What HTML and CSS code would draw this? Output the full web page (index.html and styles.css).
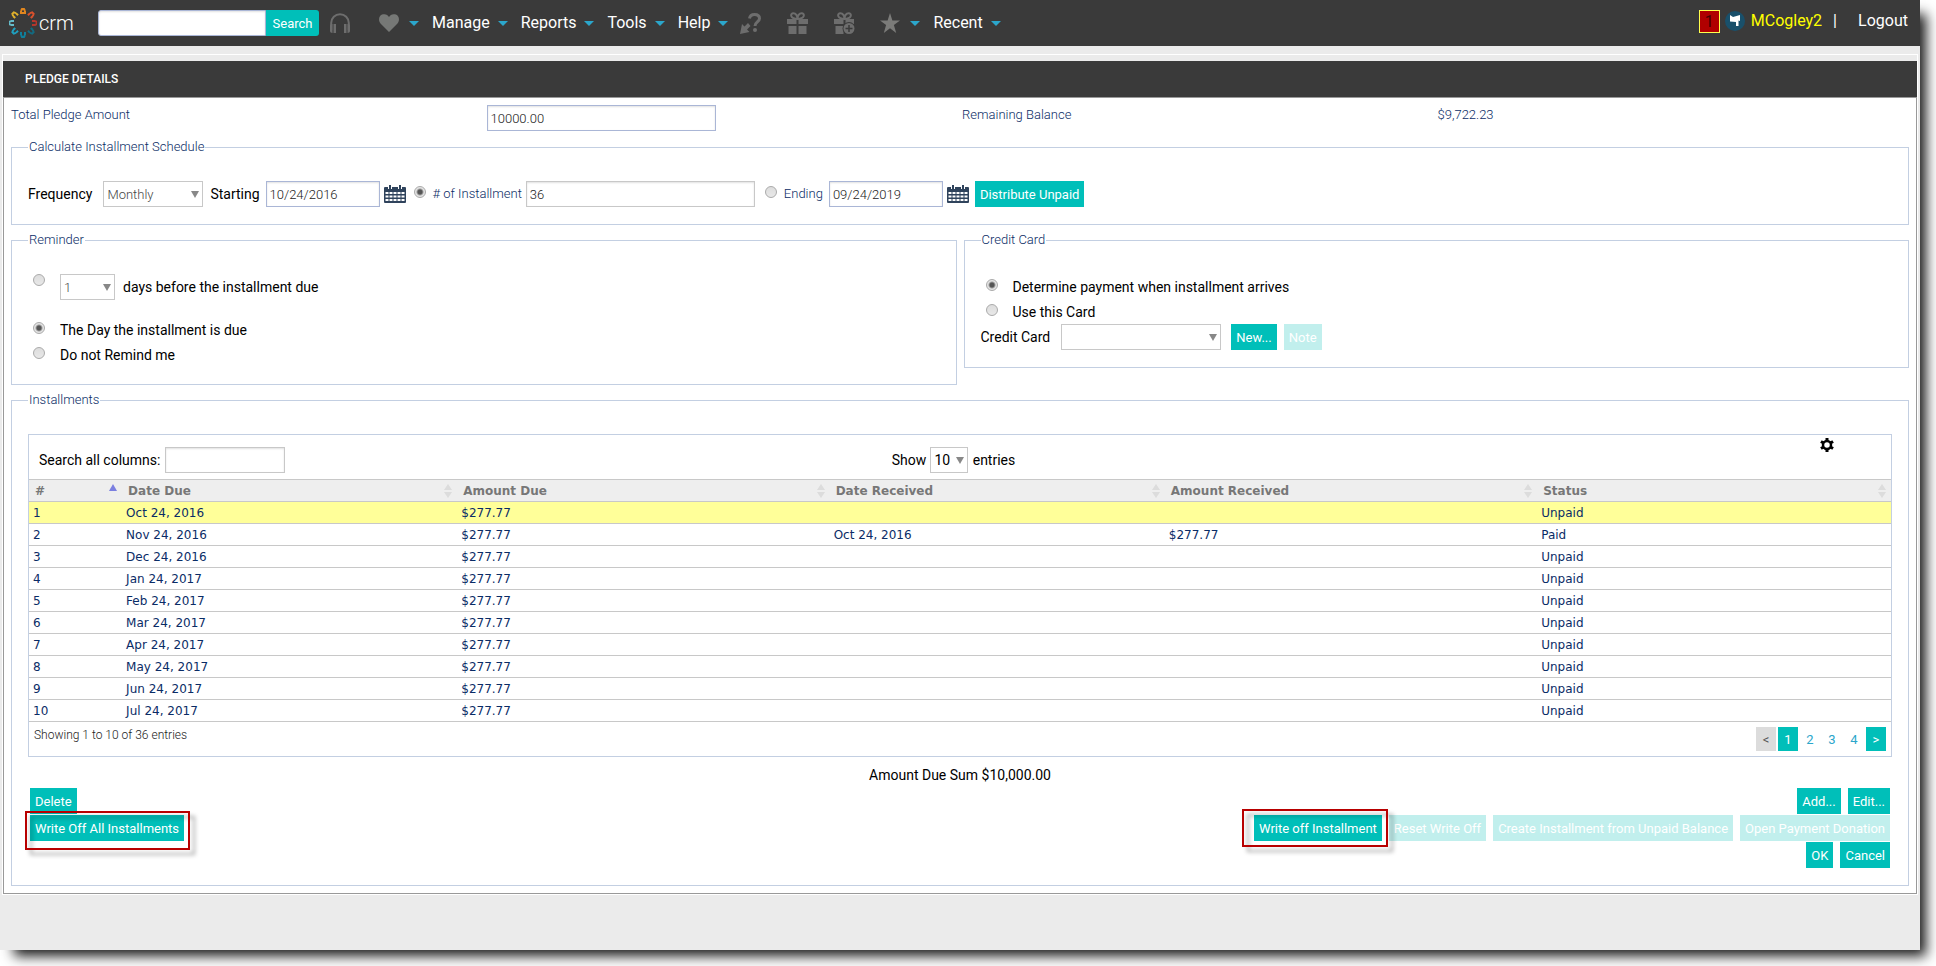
FILE: index.html
```html
<!DOCTYPE html>
<html lang="en">
<head>
  <meta charset="UTF-8">
  <title>Pledge Details</title>
  <link rel="stylesheet" href="styles.css">
</head>
<body>
  <div class="window">

    <header class="topbar">
      <a class="logo" href="#">
        <svg width="28" height="30" viewBox="0 0 28 30" fill="none" stroke-width="2">
          <g stroke="#e0861f"><path d="M12 6V3M16 6V3M12 3l1-2h2l1 2M13 5h2"/></g>
          <g stroke="#d9512c" transform="rotate(45 14 15)"><path d="M12 6V3M16 6V3M12 3l1-2h2l1 2"/></g>
          <g stroke="#b5362c" transform="rotate(90 14 15)"><path d="M12 6V3M16 6V3M12 3l1-2h2l1 2"/></g>
          <g stroke="#136a80" transform="rotate(135 14 15)"><path d="M12 6V3M16 6V3M12 3l1-2h2l1 2"/></g>
          <g stroke="#0f7f9c" transform="rotate(180 14 15)"><path d="M12 6V3M16 6V3M12 3l1-2h2l1 2"/></g>
          <g stroke="#1fa0bf" transform="rotate(225 14 15)"><path d="M12 6V3M16 6V3M12 3l1-2h2l1 2"/></g>
          <g stroke="#66bccb" transform="rotate(270 14 15)"><path d="M12 6V3M16 6V3M12 3l1-2h2l1 2"/></g>
          <g stroke="#dfb02c" transform="rotate(315 14 15)"><path d="M12 6V3M16 6V3M12 3l1-2h2l1 2"/></g>
        </svg>
        <span>crm</span>
      </a>

      <form class="search">
        <input type="text" aria-label="Search">
        <button type="button">Search</button>
      </form>

      <nav class="nav">
        <a class="icon phones" href="#" aria-label="Calls">
          <svg width="20" height="20" viewBox="0 0 20 20"><path d="M1.200 17V10a8.800 8.800 0 0 1 17.600 0v7" fill="none" stroke="#6d6d6d" stroke-width="2"/><path d="M0 12.500C0 11.500 1 11 2.500 11v9C1 20 0 19 0 18zM3.500 11H6v9H3.500zM14 11h2.500v9H14zM17.500 11c1.500 0 2.500.5 2.500 1.500V18c0 1-1 2-2.500 2z" fill="#6d6d6d"/></svg>
        </a>
        <a class="icon" href="#" aria-label="Favorites">
          <svg width="20" height="18" viewBox="0 0 20 18"><path d="M10 18L1.500 9.500C-1 6.500-.2 2 3 .6 6-.6 8.800.6 10 3c1.200-2.400 4-3.600 7-2.400 3.200 1.400 4 5.900 1.500 8.900z" fill="#767876"/></svg>
          <i class="caret"></i>
        </a>
        <a href="#">Manage <i class="caret"></i></a>
        <a href="#">Reports <i class="caret"></i></a>
        <a href="#">Tools <i class="caret"></i></a>
        <a href="#">Help <i class="caret"></i></a>
        <a class="icon tool" href="#" aria-label="What is this">
          <svg width="21" height="21" viewBox="0 0 21 21"><path d="M9.500 5.500C10 2.500 12 1.500 14.500 1.500c3 0 5 1.500 5 4 0 3.500-4.500 3.500-4.500 7.500" fill="none" stroke="#6d6d6d" stroke-width="3"/><circle cx="15" cy="17" r="2" fill="#6d6d6d"/><path d="M0 21l2-10 2.500 2.500L8 10l2.500 3L7 16.500 9.500 19z" fill="#6d6d6d"/></svg>
        </a>
        <a class="icon tool" href="#" aria-label="Gift">
          <svg width="21" height="22" viewBox="0 0 21 22"><path d="M0 7h9.500v5H0zM11.500 7H21v5h-9.500zM1.500 14h8v8h-8zM11.500 14h8v8h-8z" fill="#6d6d6d"/><path d="M10.500 7C3 7 3 1.500 6 1.200 9 1 10.500 4 10.500 7c0-3 1.500-6 4.500-5.800C18 1.500 18 7 10.500 7z" fill="none" stroke="#6d6d6d" stroke-width="2"/></svg>
        </a>
        <a class="icon tool" href="#" aria-label="Add gift">
          <svg width="21" height="22" viewBox="0 0 21 22"><path d="M0 7h9.500v5H0zM11.500 7H20v5h-8.500zM1.500 14h8v8h-8z" fill="#6d6d6d"/><path d="M10.500 7C3 7 3 1.500 6 1.200 9 1 10.500 4 10.500 7c0-3 1.500-6 4.500-5.800C18 1.500 18 7 10.500 7z" fill="none" stroke="#6d6d6d" stroke-width="2"/><circle cx="15" cy="16.500" r="6.500" fill="#3a3a3a"/><circle cx="15" cy="16.500" r="5.500" fill="#6d6d6d"/><path d="M15 13v7M11.500 16.500h7" stroke="#3a3a3a" stroke-width="1.500"/></svg>
        </a>
        <a class="icon star" href="#" aria-label="Starred">
          <svg width="20" height="20" viewBox="0 0 20 20"><path d="M10 0l2.400 7.400H20l-6.100 4.700 2.300 7.900-6.200-4.700L3.800 20l2.300-7.900L0 7.400h7.600z" fill="#7b7b79"/></svg>
          <i class="caret"></i>
        </a>
        <a href="#">Recent <i class="caret"></i></a>
      </nav>

      <div class="account">
        <span class="badge">1</span>
        <svg width="20" height="20" viewBox="0 0 20 20"><circle cx="10" cy="10" r="10" fill="#19506b"/><path d="M5 4l3 2 7-2v6l-1.500-.5V15H11v-4L5 10.500z" fill="#fff"/></svg>
        <a class="user" href="#">MCogley2</a>
        <span class="bar">|</span>
        <a href="#">Logout</a>
      </div>
    </header>

    <main class="panel">
      <h1>PLEDGE DETAILS</h1>
      <div class="panel-body">

        <div class="totals">
          <label for="total">Total Pledge Amount</label>
          <input type="text" id="total" value="10000.00">
          <span>Remaining Balance</span>
          <span>$9,722.23</span>
        </div>

        <fieldset>
          <legend>Calculate Installment Schedule</legend>
          <div class="schedule">
            <label class="dark" for="freq">Frequency</label>
            <select id="freq" class="freq"><option>Monthly</option></select>
            <label class="dark" for="start">Starting</label>
            <input type="text" id="start" class="date" value="10/24/2016">
            <button type="button" class="cal" aria-label="Pick start date">
              <svg width="22" height="18" viewBox="0 0 22 18"><path d="M1 2h20a1 1 0 0 1 1 1v14a1 1 0 0 1-1 1H1a1 1 0 0 1-1-1V3a1 1 0 0 1 1-1z" fill="#2f435c"/><path d="M4 0h4v4H4zM14 0h4v4h-4z" fill="#fff"/><path d="M5 0h2v4H5zM15 0h2v4h-2z" fill="#2f435c"/><path d="M1.500 7h3v2h-3zM5.500 7h3v2h-3zM9.500 7h3v2h-3zM13.500 7h3v2h-3zM17.500 7h3v2h-3zM1.500 10.500h3v2h-3zM5.500 10.500h3v2h-3zM9.500 10.500h3v2h-3zM13.500 10.500h3v2h-3zM17.500 10.500h3v2h-3zM1.500 14h3v2h-3zM5.500 14h3v2h-3zM9.500 14h3v2h-3zM13.500 14h3v2h-3zM17.500 14h3v2h-3z" fill="#fff"/></svg>
            </button>
            <input type="radio" name="until" id="byCount" checked>
            <label for="byCount">#&nbsp;of Installment</label>
            <input type="text" class="count" aria-label="Number of installments" value="36">
            <input type="radio" name="until" id="byEnd">
            <label for="byEnd">Ending</label>
            <input type="text" class="date" aria-label="Ending date" value="09/24/2019">
            <button type="button" class="cal" aria-label="Pick end date">
              <svg width="22" height="18" viewBox="0 0 22 18"><path d="M1 2h20a1 1 0 0 1 1 1v14a1 1 0 0 1-1 1H1a1 1 0 0 1-1-1V3a1 1 0 0 1 1-1z" fill="#2f435c"/><path d="M4 0h4v4H4zM14 0h4v4h-4z" fill="#fff"/><path d="M5 0h2v4H5zM15 0h2v4h-2z" fill="#2f435c"/><path d="M1.500 7h3v2h-3zM5.500 7h3v2h-3zM9.500 7h3v2h-3zM13.500 7h3v2h-3zM17.500 7h3v2h-3zM1.500 10.500h3v2h-3zM5.500 10.500h3v2h-3zM9.500 10.500h3v2h-3zM13.500 10.500h3v2h-3zM17.500 10.500h3v2h-3zM1.500 14h3v2h-3zM5.500 14h3v2h-3zM9.500 14h3v2h-3zM13.500 14h3v2h-3zM17.500 14h3v2h-3z" fill="#fff"/></svg>
            </button>
            <button type="button" class="btn">Distribute Unpaid</button>
          </div>
        </fieldset>

        <div class="columns">
          <fieldset>
            <legend>Reminder</legend>
            <div class="choice first">
              <input type="radio" name="remind" id="remindBefore">
              <select class="days" aria-label="Days"><option>1</option></select>
              <label class="dark" for="remindBefore">days before the installment due</label>
            </div>
            <div class="choice">
              <input type="radio" name="remind" id="remindDay" checked>
              <label class="dark" for="remindDay">The Day the installment is due</label>
            </div>
            <div class="choice">
              <input type="radio" name="remind" id="remindNone">
              <label class="dark" for="remindNone">Do not Remind me</label>
            </div>
          </fieldset>

          <fieldset>
            <legend>Credit Card</legend>
            <div class="choice">
              <input type="radio" name="card" id="cardLater" checked>
              <label class="dark" for="cardLater">Determine payment when installment arrives</label>
            </div>
            <div class="choice">
              <input type="radio" name="card" id="cardThis">
              <label class="dark" for="cardThis">Use this Card</label>
            </div>
            <div class="card-row">
              <label class="dark" for="cardSel">Credit Card</label>
              <select id="cardSel" class="card-select"><option></option></select>
              <button type="button" class="btn">New...</button>
              <button type="button" class="btn" disabled>Note</button>
            </div>
          </fieldset>
        </div>

        <fieldset>
          <legend>Installments</legend>
          <div class="grid">
            <div class="grid-tools">
              <div class="filter">
                <label class="dark" for="filter">Search all columns:</label>
                <input type="text" id="filter">
              </div>
              <div class="length">
                <label class="dark" for="len">Show</label>
                <select id="len"><option>10</option></select>
                <span class="dark">entries</span>
              </div>
              <button type="button" class="gear" aria-label="Settings">
                <svg width="14" height="14" viewBox="0 0 14 14"><g fill="#000"><path d="M5.500 0h3v14h-3z"/><path d="M5.500 0h3v14h-3z" transform="rotate(60 7 7)"/><path d="M5.500 0h3v14h-3z" transform="rotate(120 7 7)"/></g><circle cx="7" cy="7" r="4" fill="#fff" stroke="#000" stroke-width="2.500"/></svg>
              </button>
            </div>

            <table>
              <colgroup>
                <col class="c-num"><col class="c-due"><col class="c-amt"><col class="c-rec"><col class="c-amtrec"><col class="c-status">
              </colgroup>
              <thead>
                <tr>
                  <th class="asc">#</th>
                  <th>Date Due</th>
                  <th>Amount Due</th>
                  <th>Date Received</th>
                  <th>Amount Received</th>
                  <th>Status</th>
                </tr>
              </thead>
              <tbody>
                <tr class="selected"><td>1</td><td>Oct 24, 2016</td><td>$277.77</td><td></td><td></td><td>Unpaid</td></tr>
                <tr><td>2</td><td>Nov 24, 2016</td><td>$277.77</td><td>Oct 24, 2016</td><td>$277.77</td><td>Paid</td></tr>
                <tr><td>3</td><td>Dec 24, 2016</td><td>$277.77</td><td></td><td></td><td>Unpaid</td></tr>
                <tr><td>4</td><td>Jan 24, 2017</td><td>$277.77</td><td></td><td></td><td>Unpaid</td></tr>
                <tr><td>5</td><td>Feb 24, 2017</td><td>$277.77</td><td></td><td></td><td>Unpaid</td></tr>
                <tr><td>6</td><td>Mar 24, 2017</td><td>$277.77</td><td></td><td></td><td>Unpaid</td></tr>
                <tr><td>7</td><td>Apr 24, 2017</td><td>$277.77</td><td></td><td></td><td>Unpaid</td></tr>
                <tr><td>8</td><td>May 24, 2017</td><td>$277.77</td><td></td><td></td><td>Unpaid</td></tr>
                <tr><td>9</td><td>Jun 24, 2017</td><td>$277.77</td><td></td><td></td><td>Unpaid</td></tr>
                <tr><td>10</td><td>Jul 24, 2017</td><td>$277.77</td><td></td><td></td><td>Unpaid</td></tr>
              </tbody>
            </table>

            <div class="grid-foot">
              <span>Showing 1 to 10 of 36 entries</span>
              <div class="pager">
                <button type="button" class="off" disabled>&lt;</button>
                <button type="button" class="on">1</button>
                <button type="button">2</button>
                <button type="button">3</button>
                <button type="button">4</button>
                <button type="button" class="on">&gt;</button>
              </div>
            </div>
          </div>

          <p class="sum">Amount Due Sum $10,000.00</p>

          <div class="actions">
            <div class="row">
              <button type="button" class="btn">Delete</button>
              <span class="push"></span>
              <button type="button" class="btn">Add...</button>
              <button type="button" class="btn">Edit...</button>
            </div>
            <div class="row">
              <span class="marked"><button type="button" class="btn">Write Off All Installments</button></span>
              <span class="push"></span>
              <span class="marked one"><button type="button" class="btn">Write off Installment</button></span>
              <button type="button" class="btn" disabled>Reset Write Off</button>
              <button type="button" class="btn" disabled>Create Installment from Unpaid Balance</button>
              <button type="button" class="btn" disabled>Open Payment Donation</button>
            </div>
            <div class="row">
              <span class="push"></span>
              <button type="button" class="btn">OK</button>
              <button type="button" class="btn">Cancel</button>
            </div>
          </div>
        </fieldset>

      </div>
    </main>
  </div>
</body>
</html>
```
FILE: styles.css
```css
* {
  box-sizing: border-box;
}

body {
  margin: 0;
  padding: 0 16px 16px 0;
  background: #fff;
  color: #0a2c66;
  font-family: Roboto, Arial, sans-serif;
  font-size: 13px;
  line-height: 16px;
}

a {
  color: #fff;
  text-decoration: none;
}

button,
input,
select {
  margin: 0;
  font-family: inherit;
  font-size: 13px;
}

.window {
  min-height: calc(100vh - 16px);
  background: #ebebeb;
  box-shadow: 10px 10px 12px -4px rgba(0, 0, 0, 0.9);
}

/* Top bar */
.topbar {
  display: flex;
  align-items: center;
  height: 46px;
  padding: 0 12px 0 9px;
  background: #3a3a3a;
  font-size: 16px;
}

.logo {
  display: flex;
  align-items: center;
  gap: 2px;
  width: 89px;
  font-size: 20px;
  font-weight: 300;
}

.search {
  display: flex;
}

.search input {
  width: 168px;
  height: 26px;
  border: 1px solid #a9b4d0;
  border-radius: 3px 0 0 3px;
}

.search button {
  width: 53px;
  height: 26px;
  padding: 0;
  border: 0;
  border-radius: 0 3px 3px 0;
  background: #00bfb9;
  color: #fff;
}

.nav {
  display: flex;
  align-items: center;
}

.nav a {
  display: flex;
  align-items: center;
  margin-left: 13px;
  gap: 8px;
}

.nav .icon {
  gap: 10px;
}

.nav .phones {
  margin: 0 16px 0 11px;
}

.nav .tool {
  margin-left: 26px;
}

.nav .tool:nth-child(7) {
  margin-left: 12px;
}

.nav .star {
  margin-left: 25px;
}

.caret {
  border: 5px solid transparent;
  border-top-color: #2ba6cb;
  border-bottom: 0;
}

.account {
  display: flex;
  align-items: center;
  margin: 0 0 4px auto;
}

.badge {
  width: 21px;
  height: 23px;
  margin-right: 5px;
  border: 1px solid #ffff4d;
  background: #b00000;
  color: #400;
  line-height: 21px;
  text-align: center;
}

.user {
  margin-left: 6px;
  color: #ff0;
}

.bar {
  width: 36px;
  padding-left: 11px;
  color: #fff;
}

/* Panel */
.panel {
  margin: 8px 2px 0;
  padding-top: 6px;
  border: 1px solid #fff;
}

.panel h1 {
  margin: 0;
  padding: 0 22px;
  background: #3a3a3a;
  color: #fff;
  font-size: 12px;
  font-weight: 500;
  line-height: 36px;
}

.panel-body {
  display: grid;
  gap: 7px;
  padding: 0 7px 7px;
  border: 1px solid #999;
  background: #fff;
}

.totals {
  display: grid;
  grid-template-columns: repeat(4, 1fr);
  column-gap: 4px;
  height: 34px;
  padding-top: 7px;
  font-weight: 300;
  line-height: 20px;
}

input[type="text"] {
  height: 26px;
  padding: 0 3px;
  border: 1px solid #aab6d6;
  background: #fff;
  box-shadow: inset 0 1px 2px rgba(0, 0, 0, 0.12);
  color: #222;
  font-weight: 300;
}

.totals input {
  width: 229px;
}

fieldset {
  min-width: 0;
  margin: 0;
  padding: 26px 16px 17px;
  border: 1px solid #c3cfe2;
}

legend {
  padding: 0 1px;
  font-weight: 300;
}

select {
  height: 26px;
  padding: 0 3px;
  appearance: none;
  border: 1px solid #c8c8c8;
  border-radius: 0;
  background: #fff url("data:image/svg+xml,%3Csvg xmlns='http://www.w3.org/2000/svg' width='8' height='7'%3E%3Cpath d='M0 0h8L4 7z' fill='%23888'/%3E%3C/svg%3E") no-repeat right 3px center;
  color: #444;
  font-weight: 300;
}

input[type="radio"] {
  flex: none;
  width: 12px;
  height: 12px;
  appearance: none;
  border: 1px solid #aaa;
  border-radius: 50%;
  background: linear-gradient(#ddd, #e8e8e8);
}

input[type="radio"]:checked {
  background: radial-gradient(circle, #555 0, #555 2px, #e4e4e4 4px);
}

.dark {
  color: #000;
  font-size: 14px;
}

.btn {
  height: 26px;
  padding: 0 5px;
  border: 0;
  background: #00bfb9;
  color: #fff;
  white-space: nowrap;
}

.btn:disabled {
  background: #c1efed;
}

.schedule {
  display: flex;
  align-items: center;
  font-weight: 300;
}

.schedule .dark {
  font-weight: 400;
}

.freq {
  width: 100px;
  margin: 0 7px 0 11px;
}

.date {
  width: 114px;
  margin: 0 4px 0 6px;
}

.count {
  width: 229px;
  margin: 0 10px 0 4px;
}

.schedule .count,
.filter input[type="text"] {
  border-color: #c8c8c8;
}

.cal {
  display: flex;
  margin-right: 6px;
  padding: 0;
  border: 0;
  background: none;
}

.schedule input[type="radio"] {
  margin: 0 7px 4px 0;
}

.cal + input[type="radio"] {
  margin-left: 2px;
}

.columns {
  display: grid;
  grid-template-columns: 1fr 1fr;
  align-items: start;
  gap: 7px;
}

.choice {
  display: flex;
  align-items: center;
  height: 25px;
  padding-left: 5px;
}

.choice input[type="radio"] {
  margin: 0 15px 4px 0;
}

.choice.first {
  height: 26px;
  margin-bottom: 17px;
}

.choice.first input {
  margin-bottom: 14px;
}

.days {
  width: 55px;
  margin-right: 8px;
}

.card-row {
  display: flex;
  align-items: center;
}

.card-select {
  width: 160px;
  margin: 0 10px 0 11px;
}

.card-row .btn + .btn {
  margin-left: 7px;
}

/* Installments */
.grid {
  border: 1px solid #c3cfe2;
}

.grid-tools {
  display: grid;
  grid-template-columns: 1fr auto 1fr;
  align-items: center;
  height: 44px;
  padding: 3px 57px 0 10px;
}

.filter,
.length {
  padding-top: 3px;
}

.filter input {
  width: 120px;
  margin-left: 1px;
}

.length {
  margin-left: 34px;
}

.length select {
  width: 38px;
  margin: 0 1px;
  color: #000;
  font-size: 14px;
  font-weight: 400;
}

.gear {
  justify-self: end;
  align-self: start;
  padding: 0;
  border: 0;
  background: none;
}

.gear svg {
  display: block;
}

table {
  width: 100%;
  border-collapse: collapse;
  border-bottom: 1px solid #c8c8c8;
  table-layout: fixed;
  font: 12px/16px Verdana, "DejaVu Sans", sans-serif;
}

.c-num { width: 5%; }
.c-due { width: 18%; }
.c-amt { width: 20%; }
.c-rec { width: 18%; }
.c-amtrec { width: 20%; }
.c-status { width: 19%; }

th,
td {
  height: 22px;
  padding: 0 4px;
  border-top: 1px solid #c8c8c8;
  text-align: left;
}

th {
  padding-left: 6px;
  background: #eee url("data:image/svg+xml,%3Csvg xmlns='http://www.w3.org/2000/svg' width='8' height='14'%3E%3Cpath d='M0 6l4-6 4 6zM0 8h8l-4 6z' fill='%23dcdcdc'/%3E%3C/svg%3E") no-repeat right 5px center;
  color: #777;
}

th.asc {
  background-image: url("data:image/svg+xml,%3Csvg xmlns='http://www.w3.org/2000/svg' width='8' height='14'%3E%3Cpath d='M0 7l4-7 4 7z' fill='%237b7fe0'/%3E%3C/svg%3E");
}

.selected {
  background: #ffff99;
}

.grid-foot {
  display: flex;
  justify-content: space-between;
  padding: 5px;
  color: #222;
  font-size: 12px;
  font-weight: 300;
}

.pager {
  display: flex;
  gap: 2px;
}

.pager button {
  width: 20px;
  height: 24px;
  padding: 0;
  border: 0;
  background: none;
  color: #2ba6cb;
}

.pager .off {
  background: #dcdcdc;
  color: #555;
}

.pager .on {
  background: #00bfb9;
  color: #fff;
}

.sum {
  margin: 10px 0 5px;
  color: #000;
  font-size: 14px;
  text-align: center;
}

.actions {
  display: grid;
  gap: 1px;
  padding: 0 2px;
}

.row {
  display: flex;
  gap: 7px;
}

.push {
  flex: 1;
}

/* Red call-out frames round the write-off buttons */
.marked {
  position: relative;
}

.marked::after {
  content: "";
  position: absolute;
  inset: -4px -6px -9px -5px;
  border: 2px solid #b80000;
  filter: drop-shadow(5px 5px 2px rgba(0, 0, 0, 0.35));
  pointer-events: none;
}

.marked.one::after {
  inset: -6px -6px -6px -12px;
}
```
